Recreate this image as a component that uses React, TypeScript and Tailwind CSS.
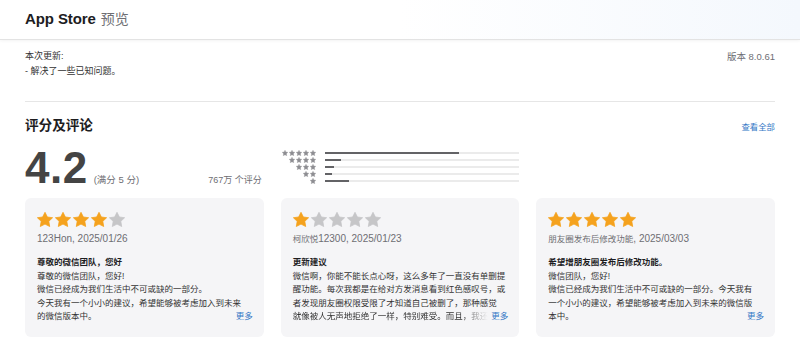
const font = { fontFamily: '"Liberation Sans", "Noto Sans CJK SC", sans-serif' };

type Review = {
  stars: number;
  name: string;
  date: string;
  title: string;
  lines: string[];
  fade?: boolean;
};

const reviews: Review[] = [
  {
    stars: 4,
    name: '123Hon',
    date: '2025/01/26',
    title: '尊敬的微信团队，您好',
    lines: [
      '尊敬的微信团队，您好!',
      '微信已经成为我们生活中不可或缺的一部分。',
      '今天我有一个小小的建议，希望能够被考虑加入到未来',
      '的微信版本中。',
    ],
  },
  {
    stars: 1,
    name: '柯欣悦12300',
    date: '2025/01/23',
    title: '更新建议',
    lines: [
      '微信啊，你能不能长点心呀，这么多年了一直没有单删提',
      '醒功能。每次我都是在给对方发消息看到红色感叹号，或',
      '者发现朋友圈权限受限了才知道自己被删了，那种感觉',
      '就像被人无声地拒绝了一样，特别难受。而且，我还',
    ],
    fade: true,
  },
  {
    stars: 5,
    name: '朋友圈发布后修改功能',
    date: '2025/03/03',
    title: '希望增朋友圈发布后修改功能。',
    lines: [
      '微信团队，您好!',
      '微信已经成为我们生活中不可或缺的一部分。今天我有',
      '一个小小的建议，希望能够被考虑加入到未来的微信版',
      '本中。',
    ],
  },
];

// share of each star row, 5 → 1
const histogram = [69, 8, 4.5, 3.5, 12];

const STAR = 'M12 0.5L15.53 7.65L23.41 8.79L17.71 14.35L19.05 22.21L12 18.5L4.95 22.21L6.29 14.35L0.59 8.79L8.47 7.65Z';

function Star({ color, className }: { color: string; className: string }) {
  return (
    <svg viewBox="0 0 24 23" preserveAspectRatio="none" className={className}>
      <path d={STAR} fill={color} stroke={color} strokeWidth={1.2} strokeLinejoin="round" />
    </svg>
  );
}

// CJK glyphs run larger than the Latin ones at the same size, so split them out
function Name({ text }: { text: string }) {
  const parts = text.split(/([\u4e00-\u9fff]+)/).filter(Boolean);
  return (
    <>
      {parts.map((p, i) =>
        /[\u4e00-\u9fff]/.test(p) ? (
          <span key={i} className="text-[8.5px]">
            {p}
          </span>
        ) : (
          <span key={i}>{p}</span>
        ),
      )}
    </>
  );
}

function ReviewCard({ r }: { r: Review }) {
  const last = r.lines.length - 1;
  return (
    <div className="rounded-[6px] bg-[#f5f5f7] pl-[12px] pr-[11px] pt-[14px] pb-[13px]">
      <div className="flex gap-[2px]">
        {[0, 1, 2, 3, 4].map((i) => (
          <Star key={i} color={i < r.stars ? '#f5a21e' : '#c6c6c8'} className="h-[15px] w-[16px]" />
        ))}
      </div>
      <div className="mt-[6px] h-[12px] text-[10px] leading-[12px] text-[#6e6e73]">
        <Name text={r.name} />, {r.date}
      </div>
      <div className="mt-[11px] text-[8.5px] leading-[13.5px] text-[#333]">
        <div className="font-bold text-[#1d1d1f]">{r.title}</div>
        {r.lines.map((line, i) =>
          i < last ? (
            <div key={i} className="whitespace-nowrap">
              {line}
            </div>
          ) : (
            <div key={i} className="flex justify-between whitespace-nowrap">
              {r.fade ? (
                <span className="[mask-image:linear-gradient(to_right,black_86%,transparent)]">{line}</span>
              ) : (
                <span>{line}</span>
              )}
              <span className="text-[#3478c6]">更多</span>
            </div>
          ),
        )}
      </div>
    </div>
  );
}

export default function App() {
  return (
    <div className="h-[357px] w-[800px] overflow-hidden bg-white text-[#1d1d1f]" style={font}>
      <header className="flex h-[40px] items-center border-b border-[#e3e3e3] bg-gradient-to-r from-white via-white to-[#f4f8fd] px-[25px] shadow-[0_1px_3px_rgba(0,0,0,0.05)]">
        <span className="text-[15px] font-bold tracking-[-0.1px] text-[#1d1d1f]">App Store</span>
        <span className="ml-[5px] text-[14px] text-[#6e6e73]">预览</span>
      </header>

      <div className="px-[25px]">
        <div className="flex justify-between pt-[9px] text-[9px] leading-[15px]">
          <div className="text-[#333]">
            <div>本次更新:</div>
            <div>- 解决了一些已知问题。</div>
          </div>
          <div className="text-[9.5px] text-[#6e6e73]">版本 8.0.61</div>
        </div>

        <div className="mt-[22px] h-px bg-[#e6e6e6]" />

        <div className="mt-[16px] flex items-baseline justify-between">
          <h2 className="text-[13.6px] font-bold leading-[16px] text-[#1d1d1f]">评分及评论</h2>
          <span className="text-[8.4px] text-[#3478c6]">查看全部</span>
        </div>

        <div className="mt-[12px] grid grid-cols-3 gap-x-[17px]">
          <div className="flex items-baseline justify-between pr-[2px]">
            <div className="flex items-baseline">
              <span className="text-[44px] font-bold leading-none tracking-[0.5px] text-[#444]">4.2</span>
              <span className="ml-[6px] text-[9.5px] text-[#6e6e73]">(满分 5 分)</span>
            </div>
            <span className="text-[9px] text-[#6e6e73]">767万 个评分</span>
          </div>

          <div className="flex flex-col pt-[4px]">
            {histogram.map((pct, idx) => {
              const count = 5 - idx;
              return (
                <div key={count} className="flex h-[6.8px] items-center">
                  <div className="flex w-[36px] justify-end gap-[1.2px]">
                    {Array.from({ length: count }).map((_, i) => (
                      <Star key={i} color="#8e8e93" className="h-[6px] w-[6px]" />
                    ))}
                  </div>
                  <div className="ml-[9px] h-[2px] w-[195px] bg-[#ebebeb]">
                    <div className="h-full bg-[#636366]" style={{ width: `${pct}%` }} />
                  </div>
                </div>
              );
            })}
          </div>
          <div />
        </div>

        <div className="mt-[8px] grid grid-cols-3 gap-x-[17px]">
          {reviews.map((r) => (
            <ReviewCard key={r.name} r={r} />
          ))}
        </div>
      </div>
    </div>
  );
}
